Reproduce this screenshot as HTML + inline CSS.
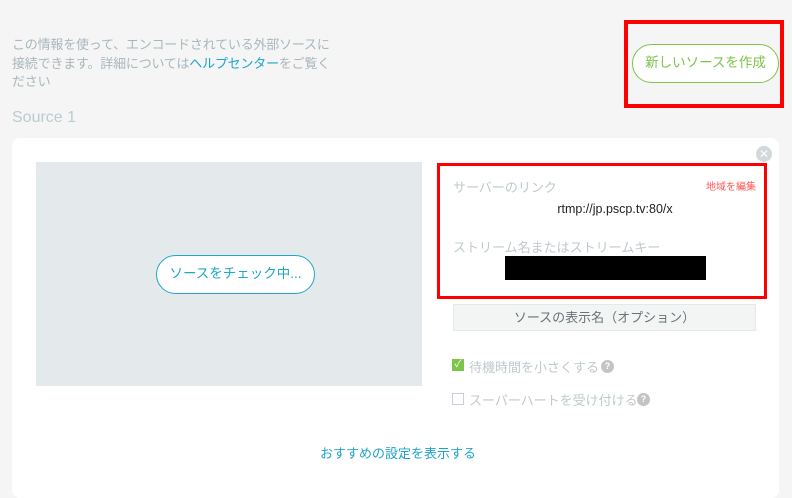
<!DOCTYPE html>
<html><head><meta charset="utf-8"><style>
*{margin:0;padding:0;box-sizing:border-box}
body{width:792px;height:488px;background:#f5f5f5;font-family:"Liberation Sans","Noto Sans CJK JP",sans-serif;position:relative;overflow:hidden}
.a{position:absolute}
.intro{left:12px;top:36px;width:322px;font-size:13px;line-height:18.5px;color:#a9b7bd;letter-spacing:-0.2px}
.intro span{color:#1ea3c9}
.src{left:12px;top:109px;font-size:16px;color:#bccbd0}
.card{left:12px;top:138px;width:767px;height:360px;background:#fff;border-radius:8px}
.gray{left:36px;top:162px;width:386px;height:224px;background:#e4e9eb}
.chk{left:156px;top:255px;width:159px;height:39px;border:1.5px solid #1da8c8;border-radius:20px;background:#fff;color:#1da8c8;font-size:13.5px;text-align:center;line-height:36px}
.red{border:4px solid #f00}
.lbl{font-size:13px;color:#bfcacd}
.inp{left:453px;top:304px;width:303px;height:27px;background:#f3f5f5;border:1px solid #e3e8e8;font-size:13px;color:#6a7378;text-align:center;line-height:25px}
.cb{width:12px;height:12px;border:1px solid #ccd;background:#fff}
.q{width:13px;height:13px;border-radius:50%;background:#c4c4c4;color:#fff;font-size:9px;text-align:center;line-height:13px;font-weight:bold}
</style></head><body>
<div class="a intro">この情報を使って、エンコードされている外部ソースに接続できます。詳細については<span>ヘルプセンター</span>をご覧ください</div>
<div class="a src">Source 1</div>
<div class="a red" style="left:624px;top:20px;width:160px;height:88px"></div>
<div class="a" style="left:632px;top:44px;width:147px;height:39px;border:1.5px solid #7cc44a;border-radius:20px;background:#fff;color:#7cc44a;font-size:13.5px;text-align:center;line-height:36px">新しいソースを作成</div>
<div class="a card"></div>
<div class="a" style="left:756px;top:146px;width:16px;height:16px;border-radius:50%;background:#d3d8da;color:#fff;font-size:12px;text-align:center;line-height:16px">✕</div>
<div class="a gray"></div>
<div class="a chk">ソースをチェック中...</div>
<div class="a red" style="left:437px;top:163px;width:330px;height:136px;border-width:3.5px"></div>
<div class="a lbl" style="left:453px;top:177px">サーバーのリンク</div>
<div class="a" style="left:706px;top:178px;font-size:10px;color:#f55">地域を編集</div>
<div class="a" style="left:430px;top:202px;width:370px;text-align:center;font-size:12.5px;color:#222">rtmp://jp.pscp.tv:80/x</div>
<div class="a lbl" style="left:453px;top:237px">ストリーム名またはストリームキー</div>
<div class="a" style="left:505px;top:256px;width:201px;height:24px;background:#000"></div>
<div class="a inp">ソースの表示名（オプション）</div>
<div class="a" style="left:452px;top:359px;width:12px;height:12px;background:#7cc44a;color:#fff;font-size:10px;line-height:12px;text-align:center">✓</div>
<div class="a lbl" style="left:469px;top:357px">待機時間を小さくする</div>
<div class="a q" style="left:601px;top:360px">?</div>
<div class="a cb" style="left:452px;top:393px"></div>
<div class="a lbl" style="left:469px;top:390px">スーパーハートを受け付ける</div>
<div class="a q" style="left:637px;top:393px">?</div>
<div class="a" style="left:320px;top:443px;font-size:13px;color:#1ea3c9">おすすめの設定を表示する</div>
</body></html>
